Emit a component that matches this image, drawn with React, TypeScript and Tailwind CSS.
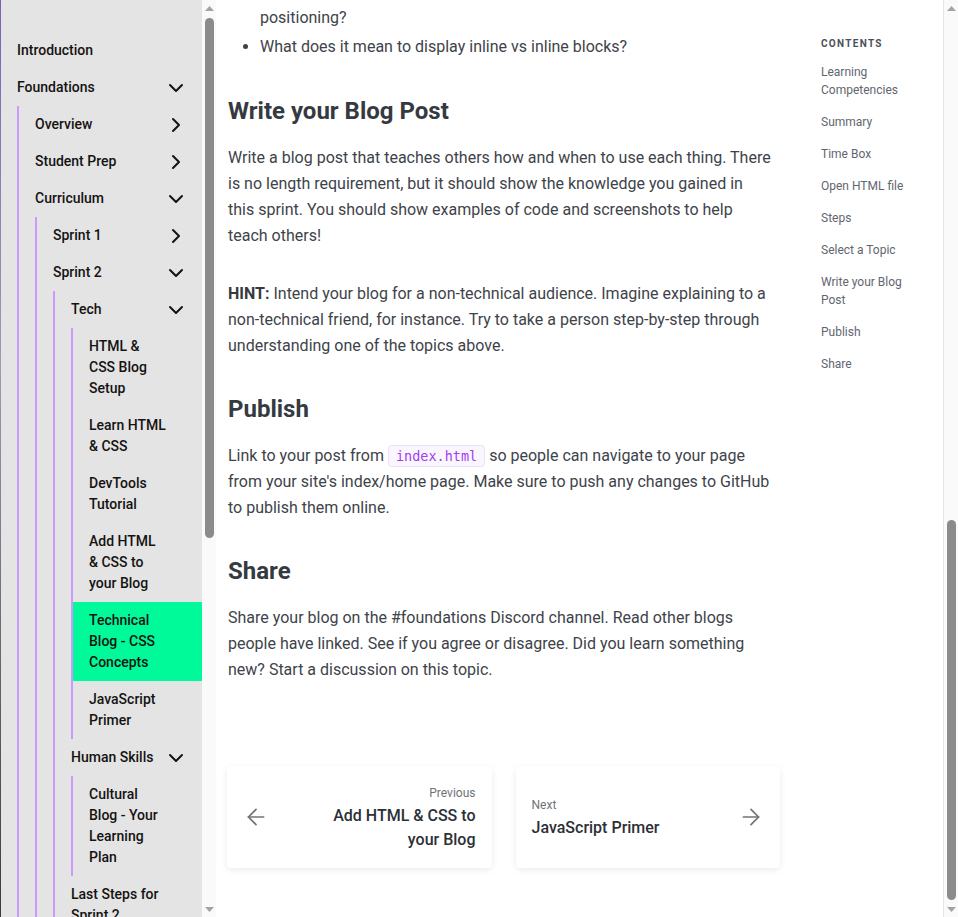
import { ArrowLeft, ArrowRight, ChevronDown, ChevronRight } from "lucide-react";

type NavItem = {
  label: string;
  open?: boolean;
  closed?: boolean;
  active?: boolean;
  children?: NavItem[];
};

const nav: NavItem[] = [
  { label: "Introduction" },
  {
    label: "Foundations",
    open: true,
    children: [
      { label: "Overview", closed: true },
      { label: "Student Prep", closed: true },
      {
        label: "Curriculum",
        open: true,
        children: [
          { label: "Sprint 1", closed: true },
          {
            label: "Sprint 2",
            open: true,
            children: [
              {
                label: "Tech",
                open: true,
                children: [
                  { label: "HTML & CSS Blog Setup" },
                  { label: "Learn HTML & CSS" },
                  { label: "DevTools Tutorial" },
                  { label: "Add HTML & CSS to your Blog" },
                  { label: "Technical Blog - CSS Concepts", active: true },
                  { label: "JavaScript Primer" },
                ],
              },
              {
                label: "Human Skills",
                open: true,
                children: [{ label: "Cultural Blog - Your Learning Plan" }],
              },
              { label: "Last Steps for Sprint 2" },
              { label: "Sprint 2 Review" },
            ],
          },
          { label: "Sprint 3", closed: true },
          { label: "Sprint 4", closed: true },
        ],
      },
    ],
  },
];

const toc = [
  "Learning Competencies",
  "Summary",
  "Time Box",
  "Open HTML file",
  "Steps",
  "Select a Topic",
  "Write your Blog Post",
  "Publish",
  "Share",
];

function NavList({ items, level }: { items: NavItem[]; level: number }) {
  const ulClass =
    level === 0 ? "" : level === 1 ? "border-l-2 border-[#cc99ff]" : "ml-4 border-l-2 border-[#cc99ff]";
  return (
    <ul className={ulClass}>
      {items.map((item) => (
        <li key={item.label}>
          <a
            href="#"
            className={`flex items-start py-2 pr-[18px] ${level > 0 ? "pl-4" : ""} ${
              item.active ? "bg-[#00fa9a]" : ""
            }`}
          >
            <span className="flex-1">{item.label}</span>
            <span className="flex h-[21px] w-4 shrink-0 items-center justify-center">
              {item.open && <ChevronDown size={24} strokeWidth={2} className="shrink-0" />}
              {item.closed && <ChevronRight size={24} strokeWidth={2} className="shrink-0" />}
            </span>
          </a>
          {item.children && <NavList items={item.children} level={level + 1} />}
        </li>
      ))}
    </ul>
  );
}

const Triangle = ({ up }: { up?: boolean }) => (
  <svg width="9" height="5" viewBox="0 0 9 5" className="fill-[#a3a3a3]">
    {up ? <polygon points="0,5 4.5,0 9,5" /> : <polygon points="0,0 9,0 4.5,5" />}
  </svg>
);

const FakeScrollbar = ({ thumbTop, thumbHeight, bordered }: { thumbTop: number; thumbHeight: number; bordered?: boolean }) => (
  <div
    className={`flex h-full shrink-0 flex-col items-center bg-[#fafafa] ${
      bordered ? "w-[15px] border-l border-[#e7e4f1]" : "w-[14px]"
    }`}
  >
    <div className="flex h-[16px] items-center justify-center">
      <Triangle up />
    </div>
    <div style={{ marginTop: thumbTop - 16 }} className="w-[9px] rounded-full bg-[#8b8b8b]">
      <div style={{ height: thumbHeight }} />
    </div>
    <div className="flex-1" />
    <div className="flex h-[16px] items-center justify-center">
      <Triangle />
    </div>
  </div>
);

const App = () => {
  return (
    <div className="flex h-[917px] w-full overflow-hidden bg-white font-['Roboto',sans-serif]">
      {/* sidebar */}
      <div className="w-px shrink-0 bg-gradient-to-b from-[#7d5fba] via-[#a897ad] via-40% to-[#3d3947]" />
      <nav className="h-full w-[201px] shrink-0 overflow-hidden bg-[#e4e4e4] pl-4 pt-[32px] text-[14px] font-medium leading-[21px] text-[#151312]">
        <NavList items={nav} level={0} />
      </nav>
      <FakeScrollbar thumbTop={18} thumbHeight={520} />

      {/* main */}
      <main className="flex min-w-0 flex-1 overflow-hidden">
        <article className="ml-3 w-[552px] shrink-0 pt-[5px] text-[16px] leading-[26px] text-[#3e434a]">
          <ul className="list-disc pl-8">
            <li className="list-none">positioning?</li>
            <li className="mt-[3px]">What does it mean to display inline vs inline blocks?</li>
          </ul>

          <h2 className="mt-[35px] mb-[18px] text-[24px] leading-8 font-bold text-[#353a41]">Write your Blog Post</h2>
          <p className="pr-2">
            Write a blog post that teaches others how and when to use each thing. There is no length requirement, but it
            should show the knowledge you gained in this sprint. You should show examples of code and screenshots to help
            teach others!
          </p>
          <p className="mt-8 pr-2">
            <strong className="font-bold text-[#353a41]">HINT:</strong> Intend your blog for a non-technical audience.
            Imagine explaining to a non-technical friend, for instance. Try to take a person step-by-step through
            understanding one of the topics above.
          </p>

          <h2 className="mt-[34px] mb-[18px] text-[24px] leading-8 font-bold text-[#353a41]">Publish</h2>
          <p className="pr-2">
            Link to your post from{" "}
            <code className="rounded-[4px] border border-[#ece4f6] bg-[#faf6fe] px-[7px] py-[2px] font-['DejaVu_Sans_Mono',monospace] text-[13.5px] text-[#a43cf0]">
              index.html
            </code>{" "}
            so people can navigate to your page from your site's index/home page. Make sure to push any changes to GitHub
            to publish them online.
          </p>

          <h2 className="mt-[34px] mb-[18px] text-[24px] leading-8 font-bold text-[#353a41]">Share</h2>
          <p className="pr-2">
            Share your blog on the #foundations Discord channel. Read other blogs people have linked. See if you agree or
            disagree. Did you learn something new? Start a discussion on this topic.
          </p>

          <div className="-ml-px mt-[83px] grid grid-cols-2 gap-6">
            <a
              href="#"
              className="flex h-[102px] items-center rounded-[4px] bg-white px-4 shadow-[0_2px_7px_rgba(0,0,0,0.08)]"
            >
              <ArrowLeft size={26} strokeWidth={1.6} className="shrink-0 text-[#707378]" />
              <div className="ml-auto w-[160px] pt-[2px] text-right">
                <div className="text-[12px] leading-[18px] text-[#6f7378]">Previous</div>
                <div className="mt-[2px] text-[16px] font-medium leading-6 text-[#2c3036]">Add HTML & CSS to your Blog</div>
              </div>
            </a>
            <a
              href="#"
              className="flex h-[102px] items-center rounded-[4px] bg-white px-4 shadow-[0_2px_7px_rgba(0,0,0,0.08)]"
            >
              <div className="flex-1 pt-[2px]">
                <div className="text-[12px] leading-[18px] text-[#6f7378]">Next</div>
                <div className="mt-[2px] text-[16px] font-medium leading-6 text-[#2c3036]">JavaScript Primer</div>
              </div>
              <ArrowRight size={26} strokeWidth={1.6} className="shrink-0 text-[#707378]" />
            </a>
          </div>
        </article>

        <aside className="ml-[41px] w-[100px] shrink-0 pt-[36px]">
          <div className="mb-3 text-[10px] font-bold leading-[15px] tracking-[0.13em] text-[#4a5059]">CONTENTS</div>
          <ul className="flex flex-col gap-[14px] text-[12px] leading-[18px] text-[#5f6670]">
            {toc.map((t) => (
              <li key={t}>
                <a href="#">{t}</a>
              </li>
            ))}
          </ul>
        </aside>
      </main>

      <FakeScrollbar thumbTop={520} thumbHeight={380} bordered />
    </div>
  );
};

export default App;
